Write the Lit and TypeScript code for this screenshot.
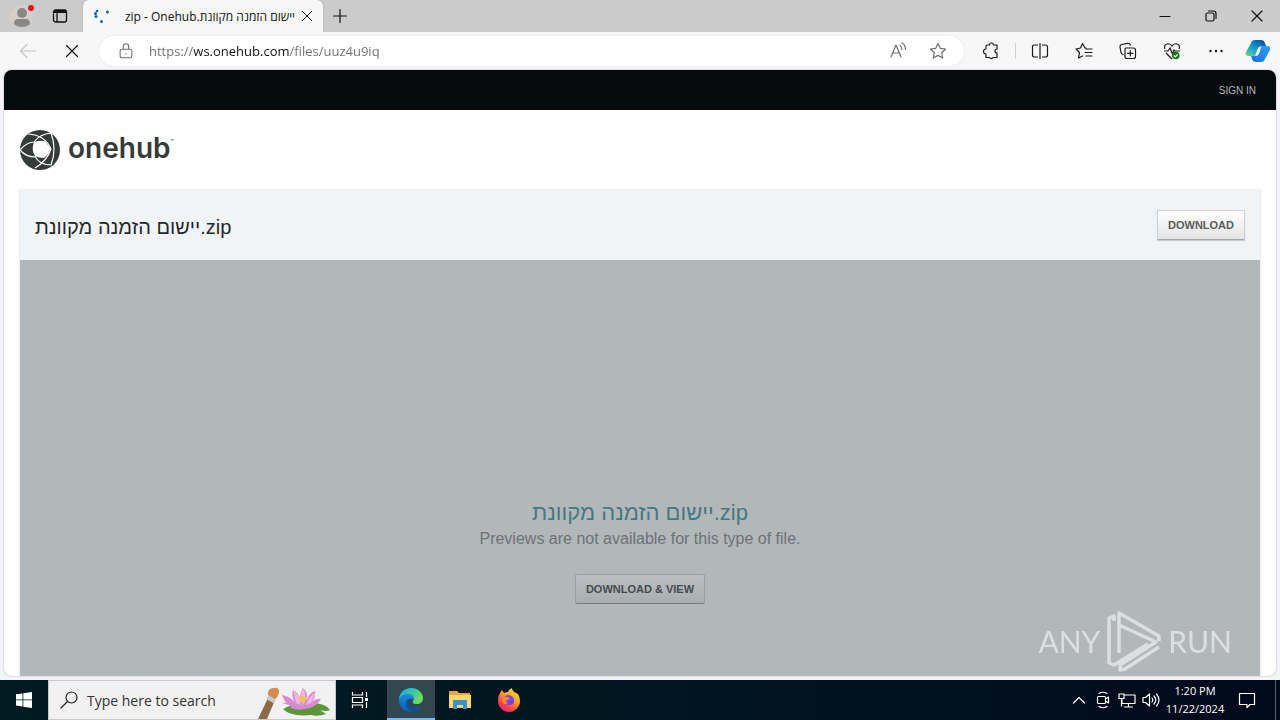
import { LitElement, html, css } from "lit";
import { customElement, property } from "lit/decorators.js";

const FILE_NAME = "יישום הזמנה מקוונת.zip";

const line = (d: string, size = 20) => html`<svg width=${size} height=${size} viewBox="0 0 20 20" fill="none" stroke="currentColor" stroke-width="1.2" stroke-linecap="round" stroke-linejoin="round" aria-hidden="true"><path d=${d}></path></svg>`;

const STAR = "M10 2.4l2.3 4.9 5.3.7-3.9 3.7 1 5.3-4.7-2.6-4.7 2.6 1-5.3L2.400 8l5.300-.7z";

@customElement("browser-tabs")
class BrowserTabs extends LitElement {
  static styles = css`
    :host { display: flex; height: 32px; flex: none; background: #cbcbcb; color: #111; font: 12px "Open Sans", "Noto Sans", sans-serif; }
    button { border: 0; padding: 0; background: none; color: inherit; display: grid; place-items: center; font: inherit; }
    .profile { width: 44px; }
    .actions { width: 32px; }
    .tab { display: flex; align-items: center; width: 240px; margin-left: 7px; padding: 0 8px 0 10px; box-sizing: border-box; background: #f7f7f7; border-radius: 6px 6px 0 0; box-shadow: 0 0 2px #999; clip-path: inset(0 -3px); }
    .title { flex: 1; margin: 0 4px 0 9px; white-space: nowrap; text-align: right; font-size: 12px; }
    .close { width: 16px; height: 24px; }
    .add { width: 34px; }
    .gap { flex: 1; }
    .win { width: 46px; }
  `;
  render() {
    return html`
      <button class="profile" aria-label="Profile"><svg width="28" height="28" viewBox="0 0 28 28"><circle cx="14" cy="14" r="11" fill="#d3d0ce"/><circle cx="14" cy="11" r="5" fill="#8b8785"/><path d="M6 22q0-5 4-5h8q4 0 4 5-3 3-8 3t-8-3z" fill="#8b8785"/><circle cx="23" cy="6" r="3" fill="#e1141e"/></svg></button>
      <button class="actions" aria-label="Tab actions"><svg width="16" height="16" viewBox="0 0 16 16" fill="none" stroke="#111" stroke-width="1.300"><rect x="1.500" y="2" width="13" height="12" rx="2"/><path d="M1.500 4h13M2 3h12" stroke-width="2"/><path d="M5 4v10"/></svg></button>
      <div class="tab">
        <svg width="18" height="18" viewBox="0 0 18 18" fill="#1664ad"><circle cx="4" cy="4" r="1.300"/><circle cx="2.500" cy="6.500" r="1.500"/><circle cx="3" cy="9.500" r="1.500"/><circle cx="8.500" cy="14.500" r="1.500"/><circle cx="14.500" cy="5" r="1.500"/></svg>
        <span class="title" dir="rtl">${FILE_NAME + " - Onehub"}</span>
        <button class="close" aria-label="Close tab">${line("M4 4l12 12M16 4L4 16", 16)}</button>
      </div>
      <button class="add" aria-label="New tab">${line("M3.500 10h13M10 3.500v13")}</button>
      <span class="gap"></span>
      <button class="win" aria-label="Minimize">${line("M5 10.500h10")}</button>
      <button class="win" aria-label="Restore">${line("M5 8.500q0-1.500 1.500-1.500h5q1.500 0 1.500 1.500v5q0 1.500-1.500 1.500h-5Q5 15 5 13.500zM7.500 5h5Q15 5 15 7.500v5")}</button>
      <button class="win" aria-label="Close">${line("M5 5l10 10M15 5L5 15")}</button>
    `;
  }
}

@customElement("browser-toolbar")
class BrowserToolbar extends LitElement {
  static styles = css`
    :host { display: flex; align-items: center; height: 38px; flex: none; padding: 0 2px 0 6px; background: #f7f7f7; color: #1a1a1a; box-sizing: border-box; }
    button { border: 0; padding: 0; background: none; color: inherit; width: 44px; height: 30px; display: grid; place-items: center; }
    .back { color: #c4c4c4; }
    .address { flex: 1; display: flex; align-items: center; height: 30px; margin: 0 5px; padding: 0 6px 0 18px; box-sizing: border-box; background: #fff; border-radius: 15px; box-shadow: 0 0 2px #ddd; color: #6e6e6e; }
    .address button { width: 40px; }
    .url { flex: 1; min-width: 0; margin-left: 14px; padding: 0; height: 24px; border: 0; outline: 0; font: 13px "Open Sans", "Noto Sans", sans-serif; -webkit-text-fill-color: transparent; background: linear-gradient(90deg, #6e6e6e 45px, #111 45px 141px, #6e6e6e 141px); -webkit-background-clip: text; background-clip: text; }
    .rule { width: 1px; height: 16px; margin: 0 2px; background: #cfcfcf; }
    .copilot { width: 40px; }
  `;
  render() {
    return html`
      <button class="back" aria-label="Back">${line("M17.500 10h-15M9 3.500L2.500 10 9 16.500")}</button>
      <button aria-label="Stop">${line("M4.500 4.500l11 11M15.500 4.500l-11 11")}</button>
      <div class="address">
        ${line("M5.500 8h9q2 0 2 2v5.500q0 2-2 2h-9q-2 0-2-2V10q0-2 2-2zM7 8V5q0-3 3-3t3 3v3M10 12.500v.500", 18)}
        <input class="url" aria-label="Address" value="https://ws.onehub.com/files/uuz4u9iq" spellcheck="false" />
        <button aria-label="Read aloud">${line("M3 16L8 4l5 12M4.700 12h6.600M12 4.500q2 1.500 2 4M14 2q3.500 2 3.500 6.500")}</button>
        <button aria-label="Favorite">${line(STAR)}</button>
      </div>
      <button aria-label="Extensions">${line("M6 4h2.500a2 2 0 0 1 4 0H16v4a2 2 0 0 0 0 4v4.500h-4a2 2 0 0 1-3.500 0H5V13a2.500 2.500 0 0 1 0-5V5q0-1 1-1z")}</button>
      <span class="rule"></span>
      <button aria-label="Split screen">${line("M7.500 4H4.500Q2.500 4 2.500 6v8q0 2 2 2h3M10 2.500v15M12.500 4h3q2 0 2 2v8q0 2-2 2h-3")}</button>
      <button aria-label="Favorites">${line("M12 7h-1L8.500 2.500 6.500 7l-4.500 1 3.500 3.500-1 5.500 4-2M12 8h6M11 11.500h7M12 15h6")}</button>
      <button aria-label="Collections">${line("M5 13.500Q3.500 13 3 11.500L2 6q-.300-2 1.500-2.500l6-1.200Q11.500 2 12.500 4M8 7h7.500q2 0 2 2v6.500q0 2-2 2H9q-2 0-2-2V8.500Q7 7 8 7zM12.300 9.500v5.500M9.500 12.300h5.500")}</button>
      <button aria-label="Browser essentials"><svg width="20" height="20" viewBox="0 0 20 20" fill="none" stroke="currentColor" stroke-width="1.200"><path d="M3 8Q1.500 4 5 3q3-1 5 2 2-3 5-2 3.500 1 2 5M2 10h4l2-3 2.500 6L12 9l1 1h5M4 12l6 6"/><circle cx="13.800" cy="14.500" r="3.800" fill="#107c10" stroke="none"/><path d="M12 14.500l1.300 1.300 2.500-2.500" stroke="#fff"/></svg></button>
      <button aria-label="Settings"><svg width="20" height="20" viewBox="0 0 20 20" fill="currentColor"><circle cx="4.500" cy="10" r="1.200"/><circle cx="10" cy="10" r="1.200"/><circle cx="15.500" cy="10" r="1.200"/></svg></button>
      <button class="copilot" aria-label="Copilot"><svg width="26" height="26" viewBox="0 0 26 26"><defs><linearGradient id="ca" x1="0" y1="1" x2=".7" y2="0"><stop offset="0" stop-color="#6bd48c"/><stop offset=".5" stop-color="#14a0d0"/><stop offset="1" stop-color="#0b57ae"/></linearGradient><linearGradient id="cb" x1="0" y1="1" x2="1" y2="0"><stop offset="0" stop-color="#1b6fe0"/><stop offset="1" stop-color="#2ca0f0"/></linearGradient></defs><path d="M6 5q1-3 4-3h6q3 0 4 3l1 3h-4q-3 0-4 3l-2 5q-1 2-3 2H4q-4 0-3-4z" fill="url(#ca)"/><path d="M20 21q-1 3-4 3h-5q-3 0-4-3l-1-3h2q3 0 4-3l2-5q1-2 4-2h4q4 0 3 4z" fill="url(#cb)"/><path d="M15.500 9q-2.500 0-3 2L11 16q0 1-1 2 3 0 4-2l1.500-5q0-1 1-2z" fill="#f3fafd"/></svg></button>
    `;
  }
}

@customElement("file-page")
class FilePage extends LitElement {
  @property() name = FILE_NAME;
  static styles = css`
    :host { display: flex; flex-direction: column; flex: 1; min-height: 0; margin: 0 4px 4px; overflow: hidden; background: #fff; border-radius: 8px; box-shadow: 0 0 2px #aaa; font-family: "Liberation Sans", sans-serif; }
    .top { display: flex; align-items: center; justify-content: flex-end; height: 40px; flex: none; padding: 0 20px; background: #050a0c; }
    .top a { color: #b4b9bb; font-size: 10px; text-decoration: none; }
    .brand { display: flex; align-items: center; gap: 8px; height: 80px; flex: none; padding: 0 16px; color: #363a39; font: 600 28px/40px "Inter", sans-serif; }
    .word { display: flex; padding-bottom: 4px; }
    .word sup { font-size: 5px; line-height: 26px; }
    .card { flex: 1; display: flex; flex-direction: column; min-height: 0; margin: 0 16px; box-shadow: 0 0 2px #ccc; }
    .head { display: flex; align-items: center; justify-content: space-between; height: 70px; flex: none; padding: 0 15px; box-sizing: border-box; background: #f1f4f7; }
    h1 { margin: 4px 0 0; font-size: 20px; font-weight: 400; color: #23282b; }
    button { height: 30px; padding: 0 10px; border: 1px solid #cfcfcf; border-bottom-color: #a5a5a5; background: linear-gradient(#fff, #e4e4e4); color: #5b5b5b; font: bold 11px "Liberation Sans", sans-serif; box-shadow: 0 1px 1px #ccc; }
    .preview { flex: 1; display: flex; flex-direction: column; align-items: center; padding-top: 238px; background: #b2b7ba; }
    h2 { margin: 0; font-size: 22px; line-height: 30px; font-weight: 400; color: #457980; }
    p { margin: 0 0 24px; font-size: 16px; line-height: 22px; color: #6c7275; }
    .preview button { border-color: #999ea1; border-bottom-color: #777c7f; background: linear-gradient(#babec1, #a9aeb1); color: #474b4e; border-radius: 2px; box-shadow: none; }
  `;
  render() {
    return html`
      <nav class="top"><a href="#signin">SIGN IN</a></nav>
      <div class="brand">
        <svg width="40" height="40" viewBox="0 0 40 40" aria-hidden="true"><circle cx="20" cy="20" r="20" fill="#363a39"/><path d="M14 12q5-2 11-1l6 8q-2 5-7 9-5 0-9-2-4-6-1-14z" fill="#fff"/><path d="M0 20Q7 12 14 12M0 20q6 7 15 7M31 3Q20 4 14 12M31 35Q19 35 15 26M31 3q6 16 0 32M8 4q17 1 23 15M31 19Q27 31 15 38" fill="none" stroke="#fff" stroke-width="1.200"/></svg>
        <span class="word">onehub<sup>™</sup></span>
      </div>
      <main class="card">
        <header class="head"><h1>${this.name}</h1><button>DOWNLOAD</button></header>
        <section class="preview">
          <h2>${this.name}</h2>
          <p>Previews are not available for this type of file.</p>
          <button>DOWNLOAD &amp; VIEW</button>
        </section>
      </main>
    `;
  }
}

@customElement("task-bar")
class TaskBar extends LitElement {
  static styles = css`
    :host { display: flex; height: 40px; flex: none; background: linear-gradient(90deg, #001a22, #001620 50%, #010a1b); color: #fff; font: 12px "Open Sans", "Noto Sans", sans-serif; }
    button { border: 0; padding: 0; background: none; color: inherit; width: 48px; display: grid; place-items: center; font: inherit; }
    .search { display: flex; align-items: center; width: 288px; padding: 0 4px 0 10px; box-sizing: border-box; background: #f2f1f1; border: 1px solid #c8c8c8; color: #222; }
    .search input { flex: 1; min-width: 0; margin-left: 8px; padding: 0; border: 0; outline: 0; background: none; font: 14px "Open Sans", "Noto Sans", sans-serif; }
    .search input::placeholder { color: #333; opacity: 1; }
    .apps { display: flex; gap: 1px; margin-left: 3px; flex: 1; }
    .active { background: #33474f; box-shadow: inset 0 -2px #76b9ed; }
    .tray { width: 24px; }
    .clock { width: 64px; font-size: 11px; line-height: 18px; align-content: center; gap: 0; }
    .notes { width: 40px; }
    .peek { width: 5px; margin-left: 8px; border-left: 1px solid #53606d; box-sizing: border-box; }
  `;
  render() {
    return html`
      <button aria-label="Start"><svg width="16" height="16" viewBox="0 0 16 16" fill="#fff"><path d="M0 2.300l6.500-.9v6.100H0zM7.300 1.300L16 0v7.500H7.300zM0 8.300h6.500v6.200L0 13.600zM7.300 8.300H16V16l-8.700-1.300z"/></svg></button>
      <label class="search">
        ${line("M18 7.500a5.500 5.500 0 1 1-11 0 5.500 5.500 0 0 1 11 0zM8.500 11.500L2 18")}
        <input aria-label="Search" placeholder="Type here to search" />
        <svg width="76" height="38" viewBox="0 0 76 38" aria-hidden="true"><path d="M14 15l6 4-8 19H3z" fill="#8b6b46"/><path d="M13 16l7 4" stroke="#c9c9c9" stroke-width="5"/><path d="M13 14q-1-6 5-7 7-1 6 5-1 4-4 6z" fill="#d88855"/><path d="M28 28q15-8 30-6 14 1 17 7-4 2-10 0l6 4q-8 3-15 1-20 2-28-6z" fill="#5b9739"/><path d="M41 28Q30 24 27 14q8 1 13 8-4-7-2-13 6 3 7 10 0-8 3-12 5 4 4 12 2-7 8-9 1 7-4 12 5-5 10-4-5 9-17 10-8 2-15-2l7 1Q32 23 27 22q6-2 14 6z" fill="#d88bd0"/><path d="M38 9q6 4 8 15l-5-2zM61 11q-8 5-10 13l5-2zM48 7q-4 7 0 17 5-8 0-17z" fill="#eeb5e6"/><path d="M42 13l4 4 2-5 1 5 4-2-3 6h-5z" fill="#f2c458"/></svg>
      </label>
      <button aria-label="Task view"><svg width="18" height="18" viewBox="0 0 18 18" fill="none" stroke="#fff" stroke-width="1.200"><path d="M1.500 1v3h10V1M1.500 17v-3h10v3M1.500 6.500h10v5h-10zM15.500 1v5M15.500 11v6"/><path d="M14 7h3v3h-3z" fill="#fff" stroke="none"/></svg></button>
      <div class="apps">
        <button class="active" aria-label="Microsoft Edge"><svg width="24" height="24" viewBox="0 0 24 24"><defs><linearGradient id="ea" x1="0" y1="0" x2="1" y2=".3"><stop offset="0" stop-color="#25a8df"/><stop offset=".6" stop-color="#35c6ad"/><stop offset="1" stop-color="#6dde5b"/></linearGradient><linearGradient id="eb" x1="0" y1="0" x2="0" y2="1"><stop offset="0" stop-color="#198ed8"/><stop offset="1" stop-color="#0b5cb5"/></linearGradient></defs><path d="M0 12C0 5 5 0 12 0s12 5 12 10c0 4-3 6-6 6-4 0-5-1-4-3 2-4-1-5-4-5-5 0-9 2-10 4z" fill="url(#ea)"/><path d="M0 12c1-4 5-6 9-6 4 0 7 3 6 6-1-2-7-2-7 3s5 7 10 5l4-2c-3 5-7 6-10 6C5 24 0 19 0 12z" fill="url(#eb)"/><path d="M8 12c-3 5 1 11 6 12 4 0 7-3 8-5-5 3-12 1-12-4 0-2 1-3 2-4-1 0-3 0-4 1z" fill="#104f96"/></svg></button>
        <button aria-label="File Explorer"><svg width="22" height="20" viewBox="0 0 22 20"><path d="M0 1h8l2 2h11v15H0z" fill="#e8a63b"/><path d="M0 5h22v13H0z" fill="#ffd869"/><path d="M4 11q0-1 1-1h12q1 0 1 1v8h-4v-4H8v4H4z" fill="#3a91d2"/></svg></button>
        <button aria-label="Firefox"><svg width="24" height="24" viewBox="0 0 24 24"><defs><linearGradient id="ff" x1=".8" y1="0" x2=".2" y2="1"><stop offset="0" stop-color="#ffe63d"/><stop offset=".45" stop-color="#ff9422"/><stop offset=".75" stop-color="#ff3e4d"/><stop offset="1" stop-color="#e5208b"/></linearGradient></defs><path d="M3 5l2-3 2 3q2-1 4-1 1-3 4-4 0 3 4 5l2 1q2 4 2 7c0 6-5 11-11 11S1 19 1 13q0-5 2-8z" fill="url(#ff)"/><path d="M7 10q1-3 5-3 5 1 5 6 0 4-5 4-4 0-5-3z" fill="#7542e5"/><path d="M6 9q3-1 7 1-1 2-4 2.500 0 2 2 2.500-3 2-5 0-1-3 0-6z" fill="#ff8a2c"/></svg></button>
      </div>
      <button class="tray" aria-label="Show hidden icons">${line("M4.500 13L10 7.500l5.500 5.500")}</button>
      <button class="tray" aria-label="Meet now">${line("M5.500 6.500h6q1 0 1 1v5q0 1-1 1h-6q-1 0-1-1v-5q0-1 1-1zM12.500 9l3-2v6l-3-2M6 3.500q4-2.500 8 0M6 16.500q4 2.500 8 0")}</button>
      <button class="tray" aria-label="Network">${line("M7 5h11v8.500H5V10M2 4h5v4.500H2zM4.500 8.500V16M11.500 13.500V17M7.500 17h8")}</button>
      <button class="tray" aria-label="Volume">${line("M2 7.500h2.500L8.500 4v12l-4-3.500H2zM11 8q1.500 2 0 4M13 6q3.500 4 0 8M15.500 4q5 6 0 12")}</button>
      <button class="clock"><span>1:20 PM</span><span>11/22/2024</span></button>
      <button class="notes" aria-label="Notifications">${line("M2.500 3.500h15v11H13l-3 3v-3H2.500z")}</button>
      <span class="peek"></span>
    `;
  }
}

@customElement("app-root")
class AppRoot extends LitElement {
  static styles = css`
    :host { display: flex; flex-direction: column; position: relative; height: 100vh; min-height: 480px; overflow: hidden; background: #f3f4f7; }
    .mark { position: absolute; right: 48px; bottom: 48px; display: flex; align-items: center; gap: 6px; height: 62px; color: #fff; opacity: .55; font: 30px "Lato", sans-serif; }
  `;
  render() {
    return html`
      <browser-tabs></browser-tabs>
      <browser-toolbar></browser-toolbar>
      <file-page></file-page>
      <task-bar></task-bar>
      <div class="mark"><span>ANY</span><svg width="56" height="62" viewBox="0 0 56 62" fill="none" stroke="#fff" stroke-width="3.500" stroke-linejoin="round"><path d="M8 11V6L3 8v45l5 2 34-21M13 43V3l40 23v5M13 15l37 17-36 23v5l5-1 34-22"/></svg><span>RUN</span></div>
    `;
  }
}
